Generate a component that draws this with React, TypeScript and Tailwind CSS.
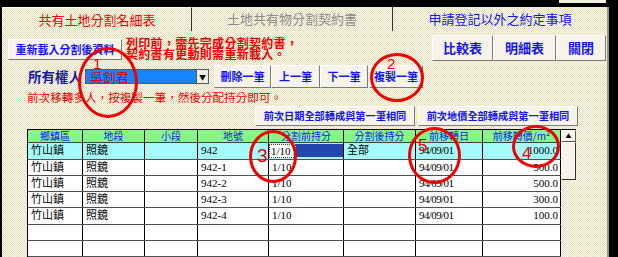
import clsx from 'clsx'
import type { ReactNode } from 'react'

const ROWS = [
  ['竹山鎮', '照鏡', '', '942', '1/10', '全部', '94/09/01', '1000.0'],
  ['竹山鎮', '照鏡', '', '942-1', '1/10', '', '94/09/01', '500.0'],
  ['竹山鎮', '照鏡', '', '942-2', '1/10', '', '94/09/01', '500.0'],
  ['竹山鎮', '照鏡', '', '942-3', '1/10', '', '94/09/01', '300.0'],
  ['竹山鎮', '照鏡', '', '942-4', '1/10', '', '94/09/01', '100.0'],
  ['', '', '', '', '', '', '', ''],
  ['', '', '', '', '', '', '', ''],
]

const HEADERS = ['鄉鎮區', '地段', '小段', '地號', '分割前持分', '分割後持分', '前移轉日']

function Btn({ children, className }: { children: ReactNode; className?: string }) {
  return (
    <button
      className={clsx(
        'flex items-center justify-center border border-t-white border-l-white border-r-[#7a7a7a] border-b-[#7a7a7a] bg-[#f5f3ea] font-bold text-[#1414f0] leading-none whitespace-nowrap',
        className
      )}
    >
      {children}
    </button>
  )
}

function Circle({ className, num, numClass }: { className: string; num: string; numClass: string }) {
  return (
    <div className={clsx('absolute rounded-[50%] border-[3px] border-[#f00000] pointer-events-none', className)}>
      <span className={clsx("absolute font-['Liberation_Sans',sans-serif] text-[#f00000] leading-none", numClass)}>
        {num}
      </span>
    </div>
  )
}

export default function App() {
  return (
    <div className="relative w-[618px] h-[257px] bg-black overflow-hidden font-['Noto_Sans_CJK_TC',sans-serif]">
      {/* top strip */}
      <div className="h-[7px] flex">
        <div className="ml-[559px] w-[47px] h-[3px] bg-[#f3f0e0]" />
      </div>

      {/* window */}
      <div className="ml-[2px] w-[607px] h-[250px] flex flex-col bg-[repeating-conic-gradient(#e4ddb6_0_25%,#fcfbf3_0_50%)] bg-[length:2px_2px] border-r-2 border-[#9a9888]">
        {/* tabs */}
        <div className="flex h-[25px] text-[13px] leading-none">
          <div className="w-[190px] flex items-center justify-center border-l border-t border-white border-r border-r-[#303030] text-[#f00000]">
            共有土地分割名細表
          </div>
          <div className="w-[201px] flex items-center justify-center border-r border-[#303030] text-[#8a8a8a]">
            土地共有物分割契約書
          </div>
          <div className="flex-1 flex items-center justify-center text-[#1414f0]">
            申請登記以外之約定事項
          </div>
        </div>

        {/* row 1 */}
        <div className="flex items-start h-[30px] pt-[4px]">
          <Btn className="ml-[6px] mt-[4px] w-[114px] h-[21px] text-[11px]">重新載入分割後資料</Btn>
          <div className="ml-[4px] mt-[2px] text-[12px] leading-[11px] font-bold text-[#f00000] tracking-[0.3px]">
            <div>列印前，需先完成分割契約書，</div>
            <div>契約書有更動則需重新載入。</div>
          </div>
          <div className="ml-auto mr-[1px] flex">
            <Btn className="w-[61px] h-[26px] text-[13px]">比較表</Btn>
            <Btn className="w-[63px] h-[26px] text-[13px]">明細表</Btn>
            <Btn className="w-[50px] h-[26px] text-[13px]">關閉</Btn>
          </div>
        </div>

        {/* row 2 */}
        <div className="flex items-center h-[25px] mt-[4px]">
          <div className="ml-[26px] w-[57px] text-[13.5px] font-bold text-[#1a1aa8] leading-none">所有權人</div>
          <div className="w-[124px] h-[15px] flex bg-[#1684ff] border border-[#5a5a5a]">
            <span className="flex-1 pl-[4px] text-[13px] leading-[14px] text-[#e00000]">吳釗君</span>
            <span className="w-[12px] flex items-center justify-center bg-[#f2f0e6] border-l border-[#5a5a5a] text-[7px] text-black">▼</span>
          </div>
          <div className="ml-[5px] flex h-[23px]">
            <Btn className="w-[57px] text-[11px]">刪除一筆</Btn>
            <Btn className="w-[49px] text-[11px]">上一筆</Btn>
            <Btn className="w-[48px] text-[11px]">下一筆</Btn>
            <Btn className="ml-[1px] w-[54px] text-[11px]">複製一筆</Btn>
          </div>
        </div>

        {/* note */}
        <div className="ml-[25px] mt-[2px] h-[13px] text-[11.6px] leading-[13px] text-[#f00000]">
          前次移轉多人，按複製一筆，然後分配持分即可。
        </div>

        {/* row 3 */}
        <div className="flex mt-[2px] h-[21px] ml-[253px]">
          <Btn className="w-[160px] text-[10.2px]">前次日期全部轉成與第一筆相同</Btn>
          <Btn className="ml-[3px] w-[160px] text-[10.2px]">前次地價全部轉成與第一筆相同</Btn>
        </div>

        {/* table */}
        <div className="flex mt-[3px] ml-[25px]">
          <div className="w-[534px] border-l border-t border-black">
            <div className="grid grid-cols-[55px_62px_53px_71px_75px_72px_67px_78px] h-[13px] bg-[#86f786] border-b border-[#404040]">
              {HEADERS.map((h) => (
                <div key={h} className="border-r border-black flex items-center justify-center text-[10px] leading-none text-[#1414f0]">
                  {h}
                </div>
              ))}
              <div className="border-r border-black flex items-center justify-center text-[10px] leading-none text-[#1414f0]">
                前移轉價/m²
              </div>
            </div>
            {ROWS.map((r, i) => (
              <div
                key={i}
                className={clsx(
                  'grid grid-cols-[55px_62px_53px_71px_75px_72px_67px_78px] border-b border-[#505050]',
                  i === 0 || i === 4 ? 'h-[17px]' : 'h-[16px]',
                  i === 0 ? 'bg-[#a4fafa]' : 'bg-white'
                )}
              >
                {r.map((c, j) =>
                  i === 0 && j === 4 ? (
                    <div key={j} className="border-r border-black flex items-center">
                      <span className="w-[27px] h-[14px] bg-white border border-dotted border-[#404040] pl-[1px] font-['Liberation_Serif',serif] text-[11px] leading-[12px] text-black">
                        {c}
                      </span>
                      <span className="flex-1 h-[13px] bg-[#2247b0]" />
                    </div>
                  ) : (
                    <div
                      key={j}
                      className={clsx(
                        "border-r border-black flex items-center font-['Liberation_Serif','Noto_Sans_CJK_TC',serif] text-[11px] leading-none text-black",
                        j === 7 ? 'justify-end pr-[2px] text-[10.5px]' : 'pl-[3px]',
                        j === 6 && 'text-[10px] tracking-[-0.6px]'
                      )}
                    >
                      {c}
                    </div>
                  )
                )}
              </div>
            ))}
          </div>
          {/* scrollbar */}
          <div className="w-[15px] flex flex-col border-t border-black">
            <div className="h-[12px] flex items-center justify-center bg-[#f5f3ea] border border-t-white border-l-white border-r-[#555] border-b-[#555] text-[6px] leading-none text-black">
              ▲
            </div>
            <div className="h-[38px] bg-[#f5f3ea] border border-t-white border-l-white border-r-[#333] border-b-[#333]" />
          </div>
        </div>
      </div>

      {/* annotations */}
      <Circle className="left-[78px] top-[47px] w-[60px] h-[71px]" num="1" numClass="left-[12px] top-[6px] text-[15px]" />
      <Circle className="left-[370px] top-[53px] w-[54px] h-[49px]" num="2" numClass="left-[14px] top-[0px] text-[15px]" />
      <Circle className="left-[249px] top-[130px] w-[48px] h-[53px]" num="3" numClass="left-[5px] top-[13px] text-[19px]" />
      <Circle className="left-[512px] top-[125px] w-[48px] h-[43px]" num="4" numClass="left-[7px] top-[17px] text-[17px]" />
      <Circle className="left-[408px] top-[127px] w-[53px] h-[57px]" num="5" numClass="left-[7px] top-[7px] text-[17px]" />
    </div>
  )
}
